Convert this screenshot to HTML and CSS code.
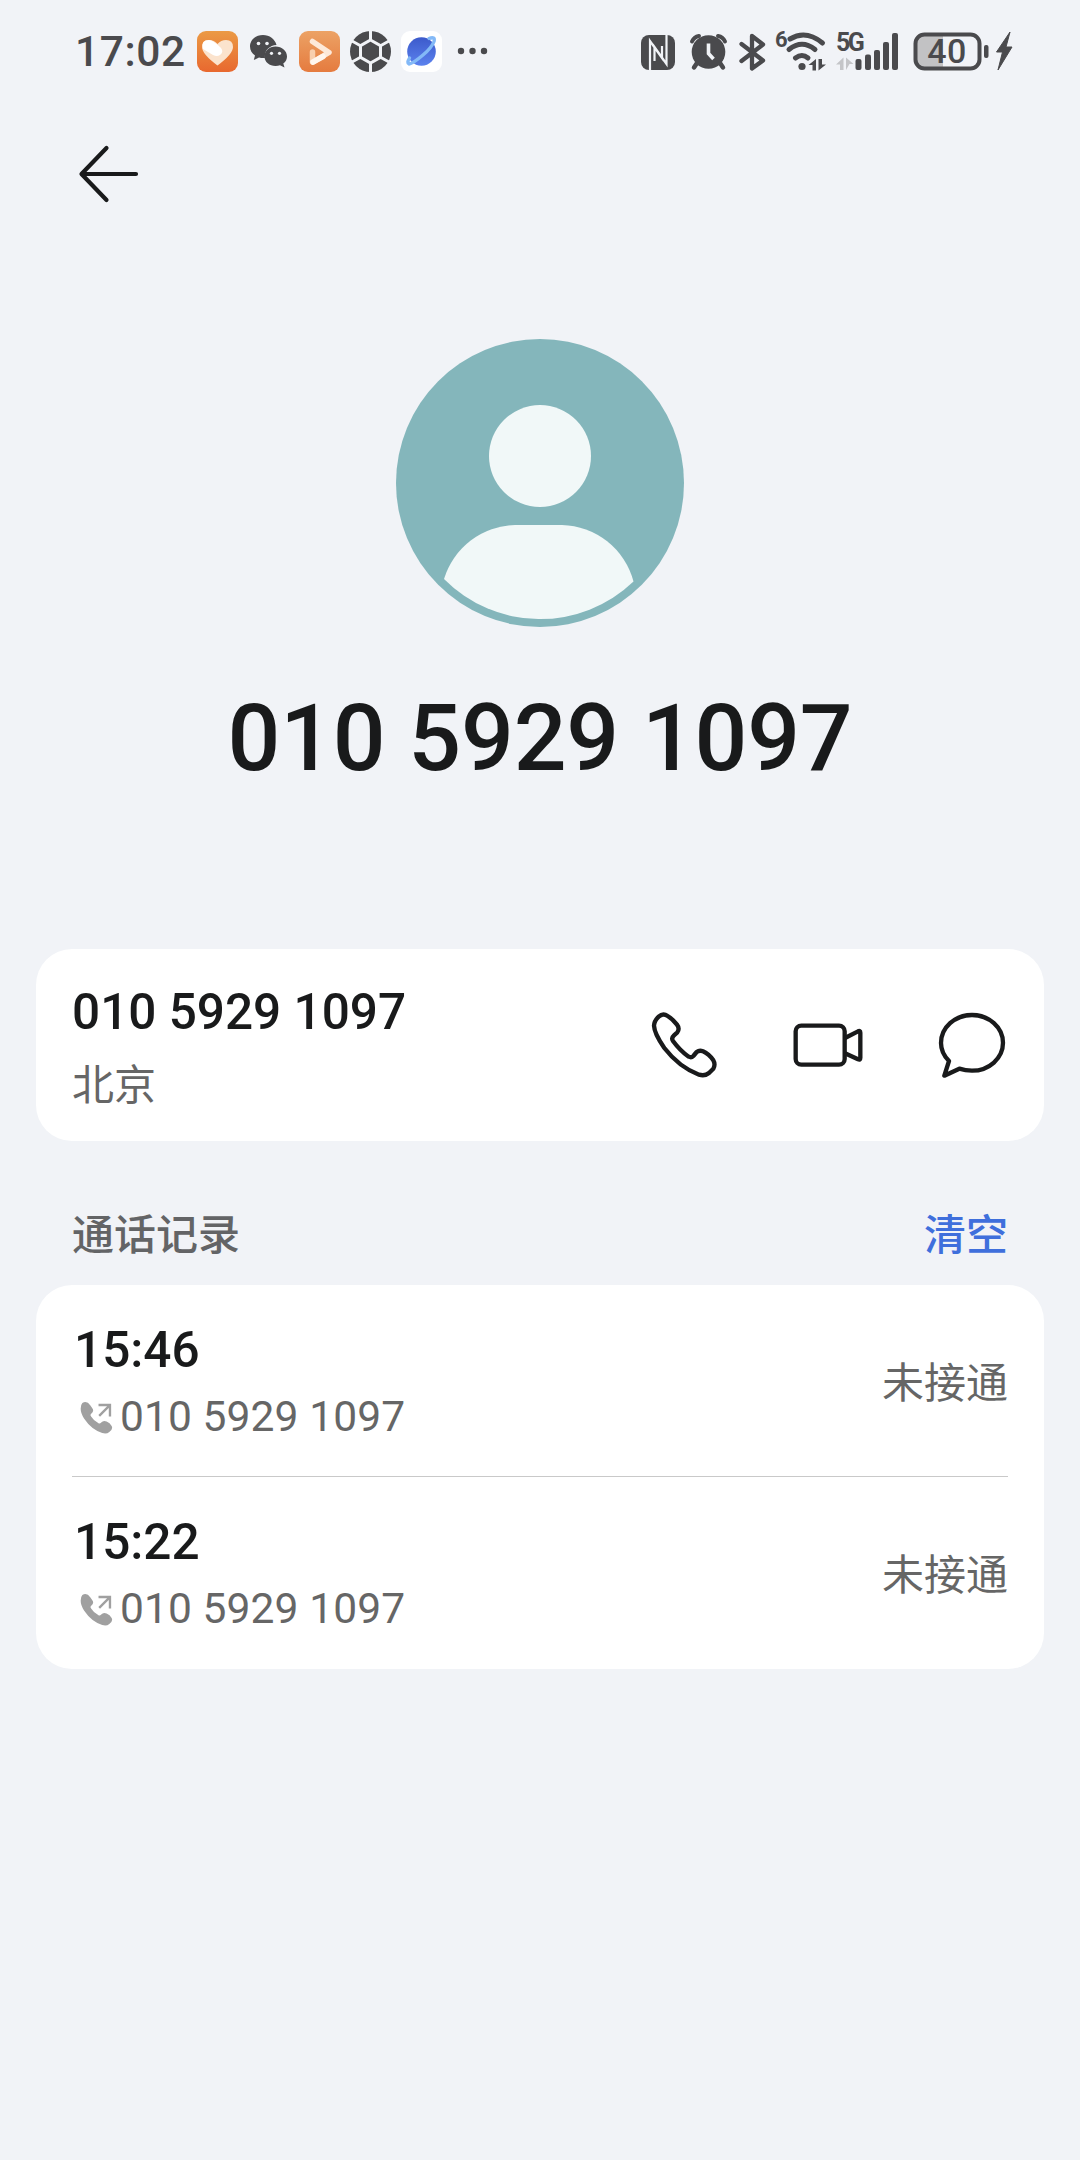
FILE: index.html
```html
<!DOCTYPE html>
<html lang="zh-CN">
<head>
    <meta charset="UTF-8">
    <meta name="viewport" content="width=device-width, initial-scale=1.0">
    <title>010 5929 1097</title>
    <link rel="stylesheet" href="styles.css">
</head>
<body>
<!-- Shared icons -->
<svg class="sprite" width="0" height="0">
    <symbol id="outgoing" viewBox="150 628 98 98">
        <path fill="#a0a0a0" d="M157 634Q170 626 181 641L188 652Q192 660 182 667Q180 670 183 674Q191 687 205 694Q209 696 213 692Q219 685 229 689Q239 693 244 702Q249 711 237 720Q229 727 216 723Q184 713 162 680Q152 664 152 651Q152 639 157 634Z"/>
        <path fill="none" stroke="#a0a0a0" stroke-width="7" d="M205 640H239V674M238 641L207 672"/>
    </symbol>
</svg>

<!-- Status bar -->
<div class="status-bar">
    <div class="clock">17:02</div>
    <div class="notifications">
        <svg width="41" height="41" viewBox="0 0 41 41">
            <defs>
                <linearGradient id="orange" x1="0" y1="0" x2="0" y2="1">
                    <stop offset="0" stop-color="#eb9a45"/>
                    <stop offset="1" stop-color="#e8682f"/>
                </linearGradient>
                <linearGradient id="peach" x1="0" y1="0" x2="0" y2="1">
                    <stop offset="0" stop-color="#eca265"/>
                    <stop offset="1" stop-color="#e57b3f"/>
                </linearGradient>
            </defs>
            <rect width="41" height="41" rx="9" fill="url(#orange)"/>
            <path d="M20.500 34.500Q5 23 5 16Q5 9 12 9Q17 9 20.500 13Q24 9 29 9Q36 9 36 16Q36 23 20.500 34.500Z" fill="#fbe3cd"/>
            <path d="M6 18Q3.500 9 12 9Q16 9 24 17Q27 21 23 24Q20 26 16 24Z" fill="#fff"/>
        </svg>
        <svg width="41" height="41" viewBox="0 0 41 41">
            <path d="M15 4C7.500 4 2 9 2 15.500C2 19.500 4 22.500 7 24.500L5.800 29L11 26.500C13 27.100 15 27.200 17 27C16 20 21 14.500 28.500 14C27 8 21.500 4 15 4Z" fill="#4a4a4d"/>
            <path d="M27.500 15.500C21 15.500 16.500 20 16.500 25.500C16.500 31 21.500 35 27.500 35C29.200 35 30.700 34.800 32 34.200L36.500 36.500L35.300 32.500C38 30.500 39 28 39 25.500C39 20 34 15.500 27.500 15.500Z" fill="#4a4a4d"/>
            <g fill="#f1f3f7">
                <circle cx="10.500" cy="12.500" r="1.800"/>
                <circle cx="19" cy="12.500" r="1.800"/>
                <circle cx="23.500" cy="22.300" r="1.600"/>
                <circle cx="31.500" cy="22.300" r="1.600"/>
            </g>
        </svg>
        <svg width="41" height="41" viewBox="0 0 41 41">
            <rect width="41" height="41" rx="9" fill="url(#peach)"/>
            <g fill="none" stroke-linecap="round" stroke-linejoin="round" stroke-width="5.500">
                <path d="M13.500 10.500L30 21.500L14 31" stroke="#fde9d9"/>
                <path d="M13.500 31V21" stroke="#f8cfae"/>
                <path d="M14 31L24 25.500" stroke="#fff6ee"/>
            </g>
        </svg>
        <svg width="41" height="41" viewBox="0 0 41 41">
            <circle cx="20.500" cy="20.500" r="20.500" fill="#4a4a4d"/>
            <g fill="none" stroke="#f1f3f7" stroke-width="3">
                <path d="M20.500 9L30.500 14.700V26.300L20.500 32L10.500 26.300V14.700Z"/>
                <path d="M20.500 0V9M20.500 32V41M30.500 14.700L39 10M30.500 26.300L39 31M10.500 14.700L2 10M10.500 26.300L2 31"/>
            </g>
        </svg>
        <svg width="41" height="41" viewBox="0 0 41 41">
            <defs>
                <linearGradient id="planet" x1="0" y1="0" x2="0" y2="1">
                    <stop offset="0" stop-color="#3c5acb"/>
                    <stop offset="1" stop-color="#5b82ee"/>
                </linearGradient>
            </defs>
            <rect width="41" height="41" rx="9" fill="#fff"/>
            <circle cx="20.500" cy="20.500" r="14.300" fill="url(#planet)"/>
            <path d="M28 7.500Q34.500 5 33 10.500Q30.500 17 22 24Q12 32.500 8 33Q5.500 32 8.500 27" fill="none" stroke="#83b9f7" stroke-width="3.400" stroke-linecap="round"/>
        </svg>
        <svg width="41" height="41" viewBox="0 0 41 41" fill="#4a4a4d">
            <circle cx="9" cy="20" r="3.200"/>
            <circle cx="20.500" cy="20" r="3.200"/>
            <circle cx="32" cy="20" r="3.200"/>
        </svg>
    </div>
    <div class="system-icons">
        <!-- NFC -->
        <svg width="46" height="80" viewBox="636 11 46 80">
            <rect x="641" y="34" width="34" height="35" rx="8" fill="#4a4a4d"/>
            <path d="M650 70V40L662 57V45M666.500 33V63L654.500 46V60" fill="none" stroke="#f1f3f7" stroke-width="2.200"/>
        </svg>
        <!-- Alarm -->
        <svg width="52" height="80" viewBox="682 11 52 80">
            <g fill="none" stroke="#4a4a4d" stroke-linecap="round">
                <path d="M692 40.500Q694 36 699 35M725 40.500Q723 36 718 35" stroke-width="4"/>
                <path d="M697 62L694 66.500M720 62L723 66.500" stroke-width="4.500"/>
            </g>
            <circle cx="708.500" cy="51" r="16.800" fill="#4a4a4d"/>
            <path d="M708.500 42.500V52.500L713.500 58" fill="none" stroke="#f1f3f7" stroke-width="3.600"/>
        </svg>
        <!-- Bluetooth -->
        <svg width="38" height="80" viewBox="734 11 38 80">
            <path d="M741.500 43L763 59.500L752 67.500V35L763 43.500L741.500 60" fill="none" stroke="#4a4a4d" stroke-width="4.300" stroke-linecap="round" stroke-linejoin="round"/>
        </svg>
        <!-- Wi-Fi 6 -->
        <svg width="58" height="80" viewBox="772 11 58 80">
            <text class="badge-six" x="775" y="46">6</text>
            <g fill="none" stroke="#4a4a4d" stroke-width="5" stroke-linecap="round">
                <path d="M790 38Q806 28.500 822.500 42"/>
                <path d="M789 48.500Q802 38 815 48.500"/>
                <path d="M795.500 57Q802 52 808 57"/>
            </g>
            <circle cx="802" cy="65.500" r="3.600" fill="#4a4a4d"/>
            <path d="M808.500 64L816 58V69.500H812.500V64ZM818.500 69.500V58H822V63.500H826Z" fill="#4a4a4d"/>
        </svg>
        <!-- Mobile signal -->
        <svg width="74" height="80" viewBox="830 11 74 80">
            <text class="badge-5g" x="836" y="49.500">5G</text>
            <path d="M836 63.500L843.500 56.500V69H840V63.500ZM846 69V56.500L853.500 63H849.500Z" fill="#c4c5c8"/>
            <g fill="#4a4a4d">
                <rect x="855.500" y="58" width="6" height="11" rx="2"/>
                <rect x="865" y="53.500" width="6" height="15.500" rx="2"/>
                <rect x="874" y="49" width="6" height="20" rx="2"/>
                <rect x="883" y="41" width="6" height="28" rx="2"/>
                <rect x="892" y="32" width="6" height="37" rx="2"/>
            </g>
        </svg>
        <!-- Battery -->
        <svg width="116" height="80" viewBox="904 11 116 80">
            <path d="M943 34H925Q916 34 916 43V58Q916 67 925 67H943Z" fill="#c2c2c4"/>
            <rect x="915.500" y="33.500" width="64" height="34" rx="9" fill="none" stroke="#4a4a4d" stroke-width="4"/>
            <rect x="984" y="44" width="4.500" height="13" rx="2" fill="#4a4a4d"/>
            <text class="battery-level" x="947" y="62" text-anchor="middle">40</text>
            <path d="M1010 31L996.500 51H1002.500L998 69L1012 46H1006Z" fill="#4a4a4d" stroke="#4a4a4d" stroke-width="1"/>
        </svg>
    </div>
</div>

<!-- Back button -->
<div class="toolbar">
    <svg class="back" width="72" height="72" viewBox="72 138 72 72">
        <path d="M106.500 148L81.500 174L106.500 200M82 174H136" fill="none" stroke="#191a1b" stroke-width="4.200" stroke-linecap="round" stroke-linejoin="round"/>
    </svg>
</div>

<!-- Contact header -->
<div class="profile">
    <svg class="avatar" width="288" height="288" viewBox="396 339 288 288">
        <circle cx="540" cy="483" r="144" fill="#84b6bb"/>
        <circle cx="540" cy="456" r="51" fill="#f1f8f8"/>
        <path d="M444 579A76 76 0 0 1 515 525H562A76 76 0 0 1 633.500 581.500A135 135 0 0 1 444 579Z" fill="#f1f8f8"/>
    </svg>
    <h1>010 5929 1097</h1>
</div>

<!-- Number card -->
<div class="card number-card">
    <div class="number-info">
        <div class="number">010 5929 1097</div>
        <div class="region">北京</div>
    </div>
    <div class="actions">
        <svg width="72" height="72" viewBox="83 86 216 216">
            <path d="M115 109Q128 97 142 107Q158 117 170 133Q179 145 171 156L161 165Q152 173 158 182Q180 212 205 229Q213 233 219 227L229 215Q237 209 248 213Q266 221 279 240Q286 252 279 265L266 278Q254 288 236 283Q177 261 132 203Q102 160 101 136Q102 121 115 109Z"/>
        </svg>
        <svg width="72" height="72" viewBox="516 86 216 216">
            <rect x="527" y="136" width="147" height="117" rx="17"/>
            <path d="M675 173L714 153Q721 150 721 157V232Q721 240 714 237L675 219"/>
        </svg>
        <svg width="72" height="72" viewBox="948 86 216 216">
            <path d="M973 286L1018 265Q1036 271 1056 271A93 83.500 0 0 0 1056 104A93 84 0 0 0 963 188Q963 218 987 242Z"/>
        </svg>
    </div>
</div>

<!-- Call log -->
<div class="log-header">
    <span class="log-title">通话记录</span>
    <span class="clear">清空</span>
</div>
<div class="card log-card">
    <div class="log-row">
        <div>
            <div class="time">15:46</div>
            <div class="log-number"><svg width="33" height="33"><use href="#outgoing"/></svg>010 5929 1097</div>
        </div>
        <div class="result">未接通</div>
    </div>
    <div class="log-row">
        <div>
            <div class="time">15:22</div>
            <div class="log-number"><svg width="33" height="33"><use href="#outgoing"/></svg>010 5929 1097</div>
        </div>
        <div class="result">未接通</div>
    </div>
</div>
</body>
</html>
```

FILE: styles.css
```css
* {
    margin: 0;
    padding: 0;
    box-sizing: border-box;
}

body {
    font-family: Roboto, 'Noto Sans CJK SC', sans-serif;
    background: #f1f3f7;
    color: #191a1b;
    min-height: 100vh;
}

svg {
    display: block;
    flex-shrink: 0;
}

.sprite {
    position: absolute;
}

/* Status bar */
.status-bar {
    height: 103px;
    padding: 0 60px 0 75px;
    display: flex;
    align-items: center;
    color: #4a4a4d;
}

.clock {
    width: 122px;
    font-size: 42.5px;
    font-weight: 500;
    letter-spacing: 0.6px;
}

.notifications {
    display: flex;
    gap: 10px;
}

.system-icons {
    display: flex;
    margin-left: auto;
}

.badge-six {
    font-size: 22px;
    font-weight: 700;
    fill: #4a4a4d;
}

.badge-5g {
    font-size: 25px;
    font-weight: 700;
    letter-spacing: -2.5px;
    fill: #4a4a4d;
}

.battery-level {
    font-size: 34px;
    font-weight: 500;
    letter-spacing: 0.5px;
    fill: #4a4a4d;
}

/* Toolbar */
.toolbar {
    height: 236px;
    padding: 35px 72px 0;
}

/* Contact header */
.profile {
    height: 610px;
    display: flex;
    flex-direction: column;
    align-items: center;
}

h1 {
    margin-top: 57px;
    font-size: 93px;
    font-weight: 500;
    line-height: 110px;
    letter-spacing: -0.2px;
}

/* Cards */
.card {
    margin: 0 36px;
    padding: 0 36px;
    background: #fff;
    border-radius: 36px;
}

.number-card {
    height: 192px;
    display: flex;
    justify-content: space-between;
    align-items: center;
}

.number-info {
    padding-top: 7px;
}

.number {
    font-size: 49.5px;
    font-weight: 500;
    line-height: 60px;
}

.region {
    margin-top: 14px;
    font-size: 42px;
    line-height: 60px;
    color: #666;
}

.actions {
    display: flex;
    gap: 72px;
    fill: none;
    stroke: #191a1b;
    stroke-width: 13;
    stroke-linejoin: round;
}

/* Call log */
.log-header {
    height: 144px;
    padding: 65px 72px 0;
    display: flex;
    justify-content: space-between;
    font-size: 42px;
    font-weight: 500;
    line-height: 60px;
}

.log-title {
    color: #636466;
}

.clear {
    color: #3f6fdc;
}

.log-row {
    height: 192px;
    padding-top: 5px;
    display: flex;
    justify-content: space-between;
    align-items: center;
}

.log-row + .log-row {
    height: 193px;
    margin-top: -1px;
    border-top: 1px solid #c9c9c9;
}

.time {
    padding-left: 2px;
    font-size: 49.5px;
    font-weight: 500;
    line-height: 60px;
}

.log-number {
    margin-top: 7px;
    padding-left: 8px;
    display: flex;
    align-items: center;
    gap: 7px;
    font-size: 42.5px;
    font-weight: 400;
    line-height: 60px;
    letter-spacing: 0.1px;
    color: #666;
}

.result {
    font-size: 42px;
    line-height: 60px;
    color: #666;
}
```
